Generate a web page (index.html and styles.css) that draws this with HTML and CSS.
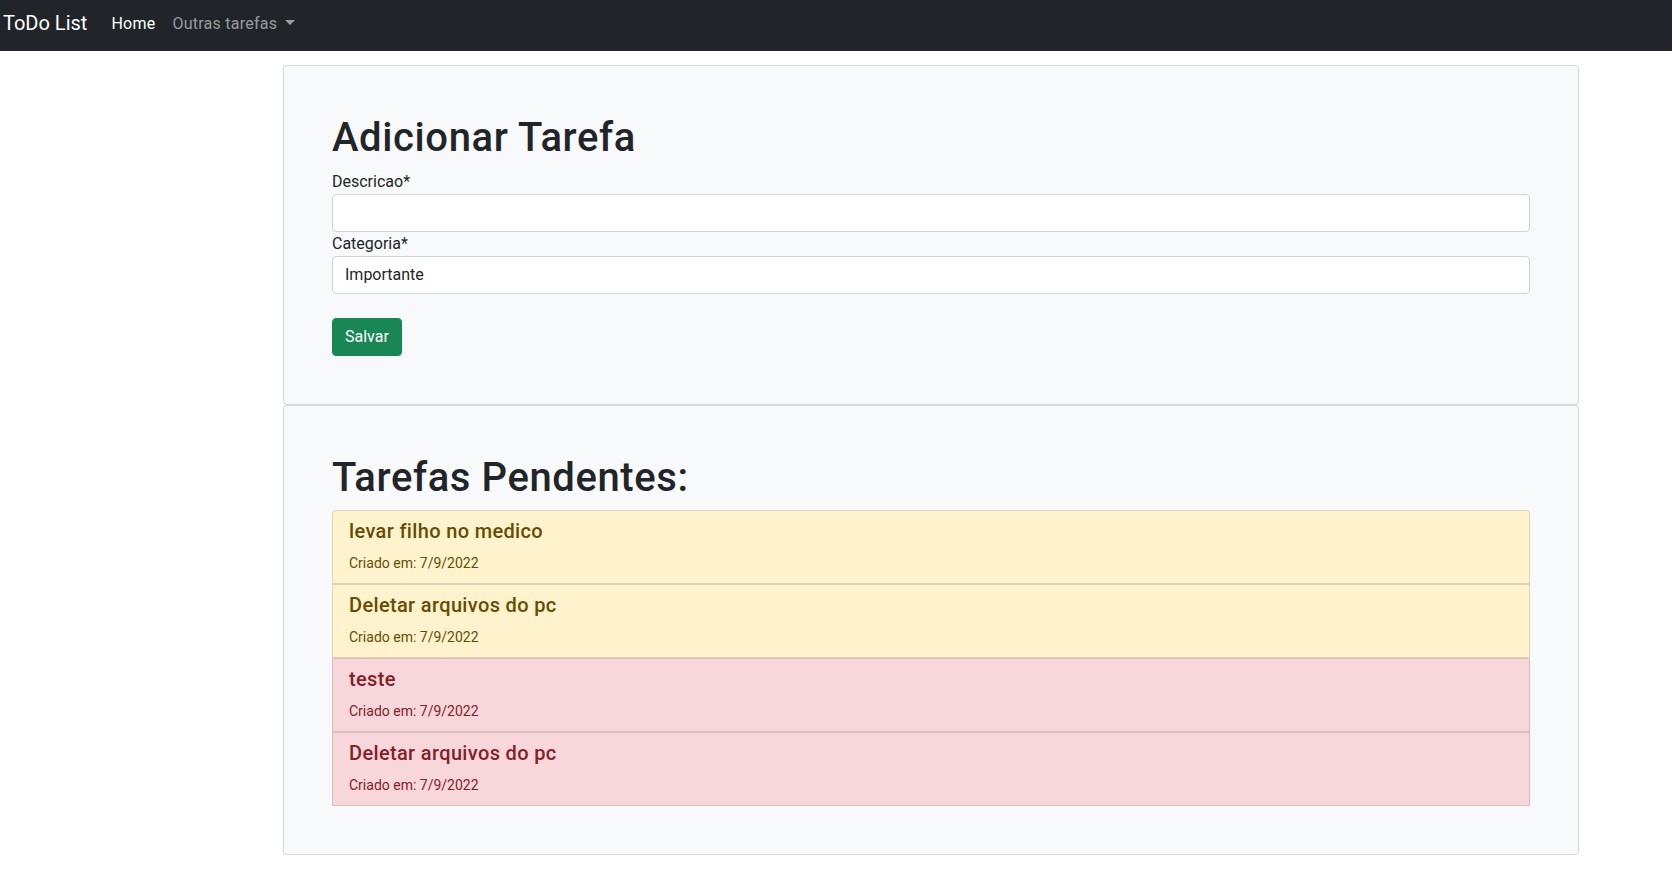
FILE: index.html
```html
<!DOCTYPE html>
<html lang="pt-br">
<head>
<meta charset="utf-8">
<title>ToDo List</title>
<link rel="stylesheet" href="styles.css">
</head>
<body>
<nav class="navbar">
  <a class="brand" href="#">ToDo List</a>
  <ul class="nav">
    <li><a class="nav-link active" href="#">Home</a></li>
    <li><a class="nav-link" href="#">Outras tarefas<span class="caret"></span></a></li>
  </ul>
</nav>
<main class="page">
  <section class="card">
    <h1>Adicionar Tarefa</h1>
    <form>
      <label for="descricao">Descricao*</label>
      <input id="descricao" class="form-control" type="text">
      <label for="categoria">Categoria*</label>
      <select id="categoria" class="form-control"><option>Importante</option></select>
      <button class="btn" type="button">Salvar</button>
    </form>
  </section>
  <section class="card">
    <h1>Tarefas Pendentes:</h1>
    <ul class="list">
      <li class="item warning first"><h5>levar filho no medico</h5><p><small>Criado em: 7/9/2022</small></p></li>
      <li class="item warning"><h5>Deletar arquivos do pc</h5><p><small>Criado em: 7/9/2022</small></p></li>
      <li class="item danger"><h5>teste</h5><p><small>Criado em: 7/9/2022</small></p></li>
      <li class="item danger"><h5>Deletar arquivos do pc</h5><p><small>Criado em: 7/9/2022</small></p></li>
    </ul>
  </section>
</main>
</body>
</html>
```

FILE: styles.css
```css
body {
  margin: 0;
  font-family: Roboto, "Liberation Sans", sans-serif;
  font-size: 16px;
  line-height: 1.5;
  color: #212529;
  background: #fff;
}

.navbar {
  display: flex;
  align-items: flex-start;
  box-sizing: border-box;
  height: 51px;
  padding: 8px 0 0 3px;
  background: #212529;
}

.brand {
  color: #fff;
  font-size: 20px;
  line-height: 30px;
  margin-right: 16px;
  text-decoration: none;
}

.nav {
  display: flex;
  list-style: none;
  margin: 4px 0 0;
  padding: 0;
}

.nav-link {
  display: block;
  padding: 0 9px 0 8px;
  line-height: 24px;
  letter-spacing: 0.25px;
  color: rgba(255, 255, 255, 0.55);
  text-decoration: none;
}

.nav-link.active {
  color: #fff;
}

.caret {
  display: inline-block;
  margin-left: 8px;
  vertical-align: 4px;
  border-top: 5px solid;
  border-left: 5px solid transparent;
  border-right: 5px solid transparent;
}

.page {
  width: 1296px;
  margin: 14px 0 0 283px;
}

.card {
  background: #f8f9fa;
  border: 1px solid rgba(0, 0, 0, 0.125);
  border-radius: 4px;
  padding: 48px;
}

h1 {
  font-size: 40px;
  font-weight: 500;
  line-height: 1.2;
  letter-spacing: 0.6px;
  margin: 0 0 8px;
}

label {
  display: block;
}

.form-control {
  display: block;
  width: 100%;
  box-sizing: border-box;
  height: 38px;
  padding: 6px 12px;
  font: inherit;
  line-height: 1.5;
  color: #212529;
  background: #fff;
  border: 1px solid #ced4da;
  border-radius: 4px;
  appearance: none;
  -webkit-appearance: none;
}

.btn {
  display: inline-block;
  margin-top: 24px;
  padding: 6px 12px;
  font: inherit;
  line-height: 1.5;
  color: #fff;
  background: #198754;
  border: 1px solid #198754;
  border-radius: 4px;
}

.list {
  list-style: none;
  margin: 0;
  padding: 0;
}

.item {
  border: 1px solid rgba(0, 0, 0, 0.125);
  padding: 8px 16px;
}

.item.first {
  border-radius: 4px 4px 0 0;
}

.item h5 {
  font-size: 20px;
  font-weight: 500;
  line-height: 1.2;
  letter-spacing: 0.35px;
  margin: 0 0 8px;
}

.item p {
  margin: 0;
}

.item small {
  font-size: 14px;
}

.warning {
  background: #fff3cd;
  color: #664d03;
}

.danger {
  background: #f8d7da;
  color: #842029;
}
```
